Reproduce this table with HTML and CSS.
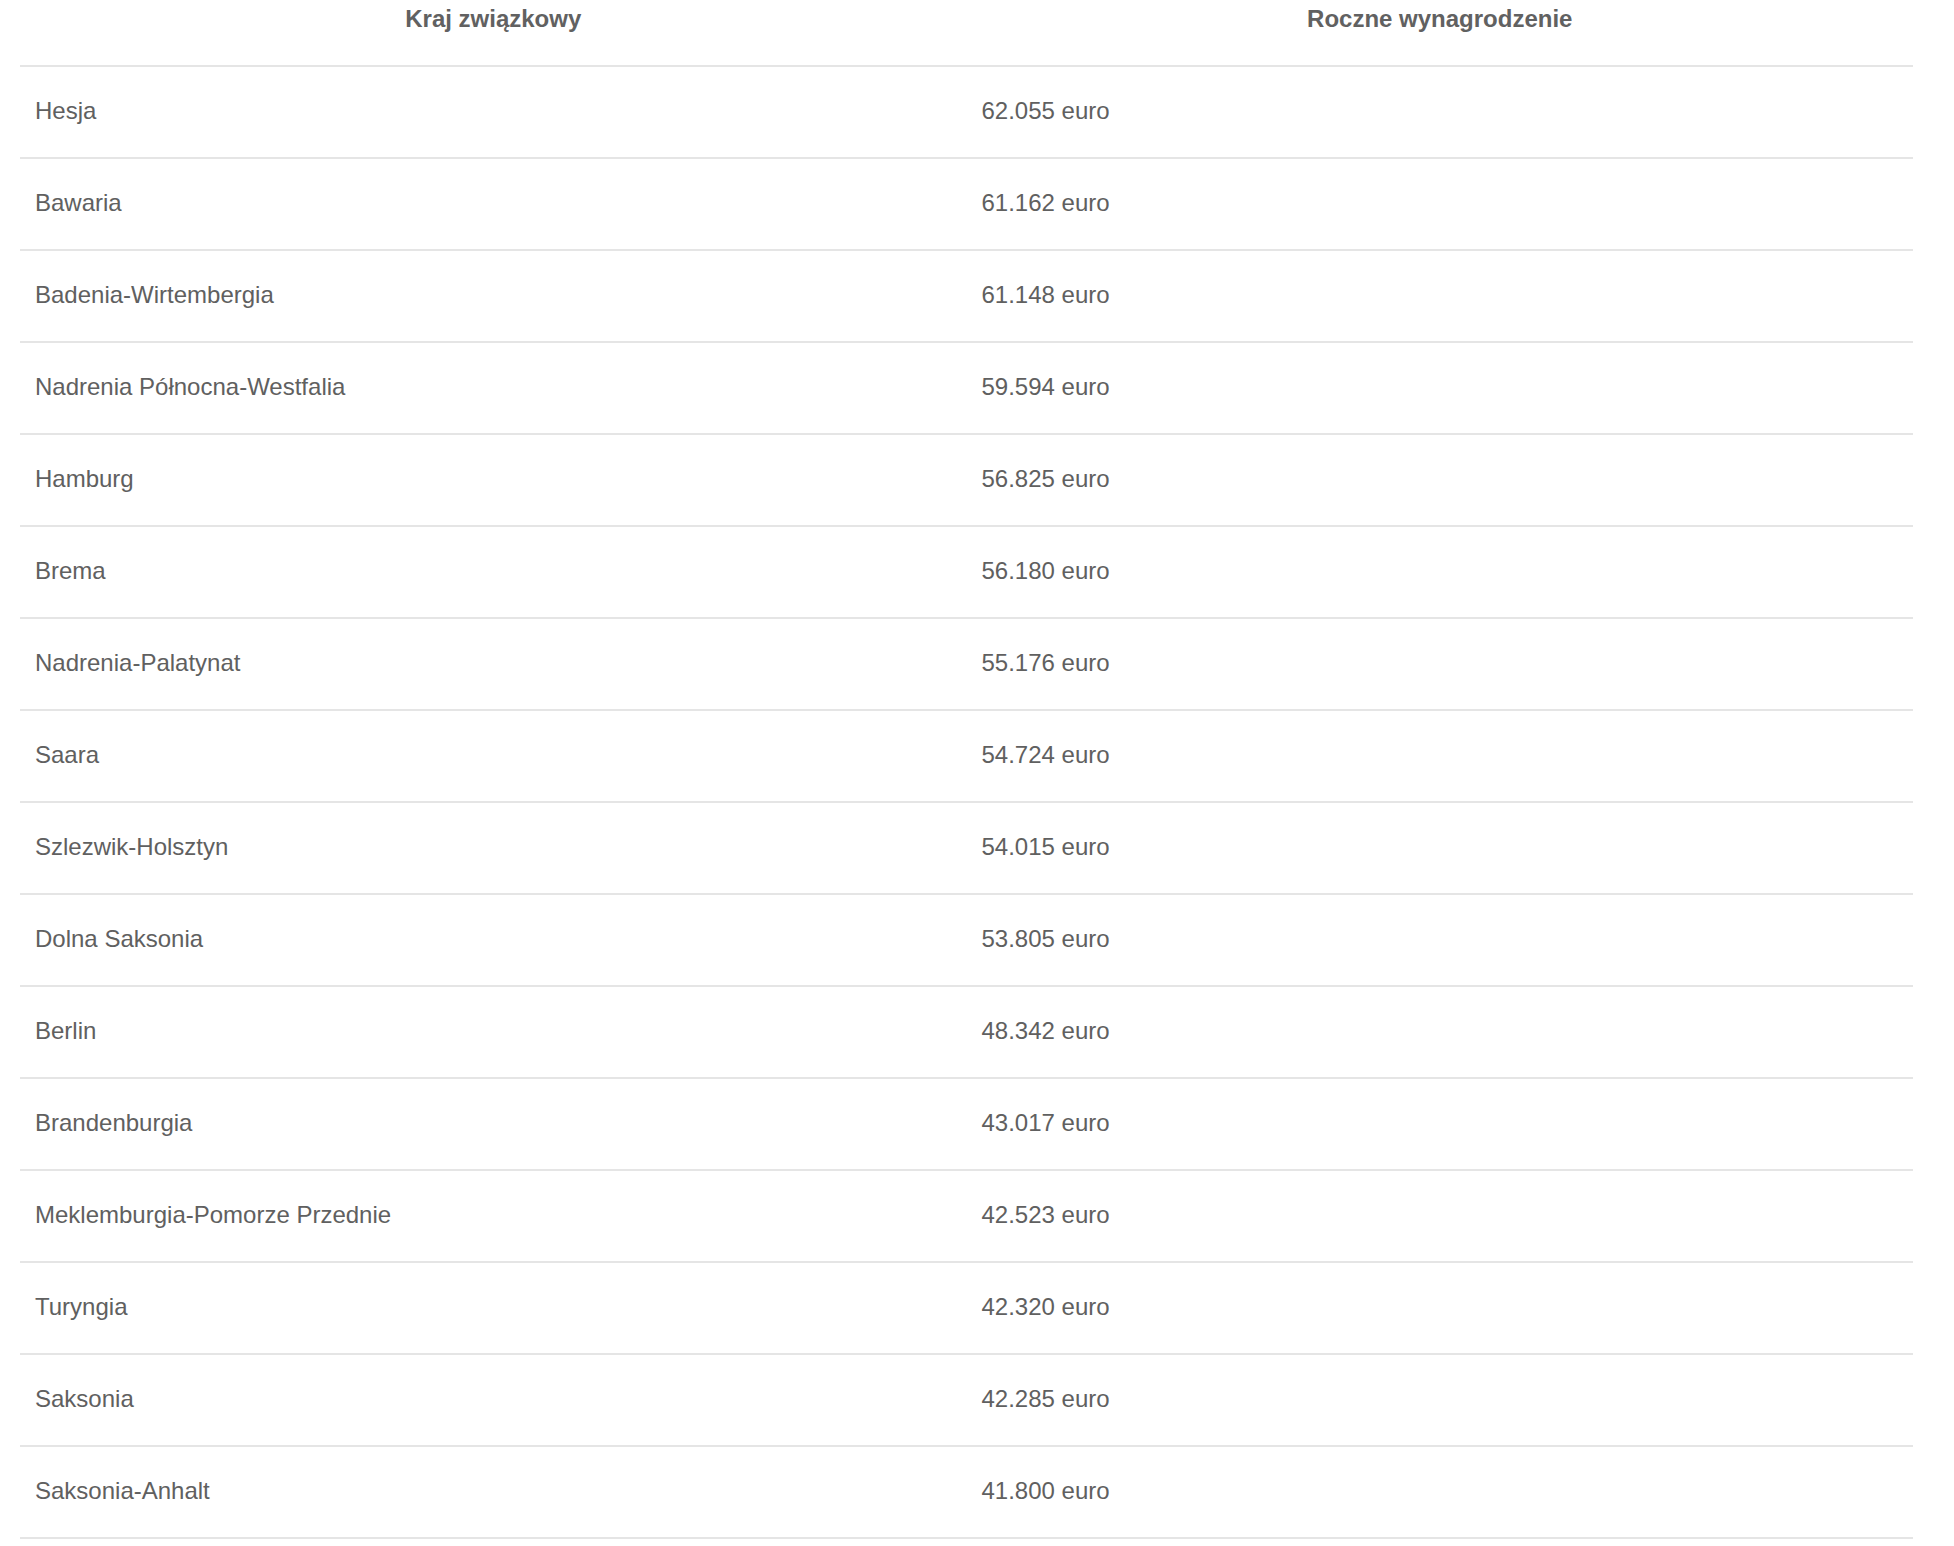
FILE: index.html
```html
<!DOCTYPE html>
<html>
<head>
  <title>Roczne wynagrodzenie</title>
  <link rel="stylesheet" href="styles.css">
</head>
<body>
  <div class="container">
    <table class="salary-table">
      <thead>
        <tr>
          <th>Kraj związkowy</th>
          <th>Roczne wynagrodzenie</th>
        </tr>
      </thead>
      <tbody>
        <tr><td>Hesja</td><td>62.055 euro</td></tr>
        <tr><td>Bawaria</td><td>61.162 euro</td></tr>
        <tr><td>Badenia-Wirtembergia</td><td>61.148 euro</td></tr>
        <tr><td>Nadrenia Północna-Westfalia</td><td>59.594 euro</td></tr>
        <tr><td>Hamburg</td><td>56.825 euro</td></tr>
        <tr><td>Brema</td><td>56.180 euro</td></tr>
        <tr><td>Nadrenia-Palatynat</td><td>55.176 euro</td></tr>
        <tr><td>Saara</td><td>54.724 euro</td></tr>
        <tr><td>Szlezwik-Holsztyn</td><td>54.015 euro</td></tr>
        <tr><td>Dolna Saksonia</td><td>53.805 euro</td></tr>
        <tr><td>Berlin</td><td>48.342 euro</td></tr>
        <tr><td>Brandenburgia</td><td>43.017 euro</td></tr>
        <tr><td>Meklemburgia-Pomorze Przednie</td><td>42.523 euro</td></tr>
        <tr><td>Turyngia</td><td>42.320 euro</td></tr>
        <tr><td>Saksonia</td><td>42.285 euro</td></tr>
        <tr><td>Saksonia-Anhalt</td><td>41.800 euro</td></tr>
      </tbody>
    </table>
  </div>
</body>
</html>
```

FILE: styles.css
```css
/* Main Styles */
body {
  font-family: "Liberation Sans", Arial, sans-serif;
  margin: 0;
  padding: 0;
  background-color: #fff;
  color: #606060;
}

.container {
  padding: 0 41px 0 20px;
}

/* Table Styles */
.salary-table {
  border-collapse: collapse;
  width: 100%;
  table-layout: fixed;
  font-size: 24px;
  line-height: 36px;
}

.salary-table th {
  font-weight: bold;
  color: #616161;
  text-align: center;
  padding: 1px 16px 28px;
  border-bottom: 2px solid #e5e5e5;
}

.salary-table td {
  text-align: left;
  padding: 26px 16px 28px 15px;
  border-bottom: 2px solid #e5e5e5;
}
```
